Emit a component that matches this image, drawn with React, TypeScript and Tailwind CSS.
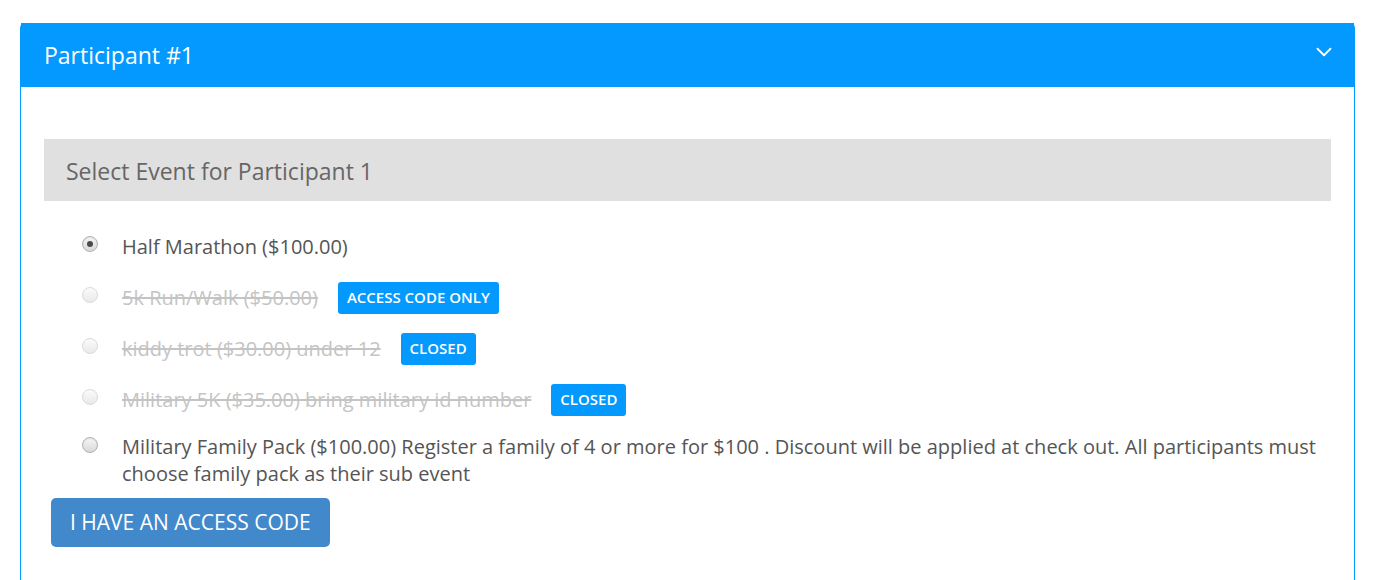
import { ChevronDown } from "lucide-react";

type Item = {
  label: string;
  disabled?: boolean;
  checked?: boolean;
  badge?: string;
};

const items: Item[] = [
  { label: "Half Marathon ($100.00)", checked: true },
  { label: "5k Run/Walk ($50.00)", disabled: true, badge: "ACCESS CODE ONLY" },
  { label: "kiddy trot ($30.00) under 12", disabled: true, badge: "CLOSED" },
  { label: "Military 5K ($35.00) bring military id number", disabled: true, badge: "CLOSED" },
];

const Radio = ({ checked, disabled }: { checked?: boolean; disabled?: boolean }) => (
  <span
    className={
      disabled
        ? "flex w-[16px] h-[16px] shrink-0 rounded-full border border-[#dadada] bg-gradient-to-b from-[#fbfbfb] to-[#e9e9e9]"
        : "flex w-[16px] h-[16px] shrink-0 items-center justify-center rounded-full border border-[#b0b0b0] bg-gradient-to-b from-[#f6f6f6] to-[#d8d8d8] shadow-[inset_0_1px_1px_rgba(0,0,0,0.08)]"
    }
  >
    {checked && <span className="w-[6px] h-[6px] rounded-full bg-[#4a4a4a]" />}
  </span>
);

const Badge = ({ text }: { text: string }) => (
  <span className="ml-[20px] inline-flex items-center h-[32px] px-[9px] rounded-[3px] bg-[#0399fe] text-white text-[15px] font-semibold">
    {text}
  </span>
);

export default function App() {
  return (
    <div className="w-[1380px] h-[580px] bg-white overflow-hidden font-['Open_Sans',sans-serif]">
      <div className="ml-[20px] mt-[23px] w-[1335px] rounded-t-[5px] border border-[#0399fe] border-b-0 h-[600px]">
        <div className="flex items-center justify-between h-[64px] bg-[#0399fe] pl-[23px] pr-[17px] -mt-px">
          <span className="text-white text-[23px] pt-[1px]">Participant #1</span>
          <ChevronDown className="text-white w-[26px] h-[26px] -mt-[6px]" strokeWidth={1.7} />
        </div>

        <div className="px-[23px] pt-[52px]">
          <div className="flex items-center h-[62px] bg-[#e0e0e0] px-[22px]">
            <span className="text-[23px] text-[#666] pt-[3px]">Select Event for Participant 1</span>
          </div>

          <div className="mt-[20px] pl-[38px]">
            {items.map((it) => (
              <div key={it.label} className="flex items-center h-[51px]">
                <div className="w-[40px] shrink-0 -mt-[5px]">
                  <Radio checked={it.checked} disabled={it.disabled} />
                </div>
                <span
                  className={
                    it.disabled
                      ? "text-[20px] leading-[27px] text-[#c4c4c4] line-through"
                      : "text-[20px] leading-[27px] text-[#555]"
                  }
                >
                  {it.label}
                </span>
                {it.badge && <Badge text={it.badge} />}
              </div>
            ))}

            <div className="flex items-start pt-[8px]">
              <div className="w-[40px] shrink-0 pt-[4px]">
                <Radio />
              </div>
              <span className="text-[20px] leading-[27px] text-[#555]">
                Military Family Pack ($100.00) Register a family of 4 or more for $100 . Discount will be applied at check out. All participants must choose family pack as their sub event
              </span>
            </div>
          </div>

          <button className="mt-[11px] ml-[7px] h-[49px] px-[19px] rounded-[5px] bg-[#4189cb] text-white text-[21px]">
            I HAVE AN ACCESS CODE
          </button>
        </div>
      </div>
    </div>
  );
}
